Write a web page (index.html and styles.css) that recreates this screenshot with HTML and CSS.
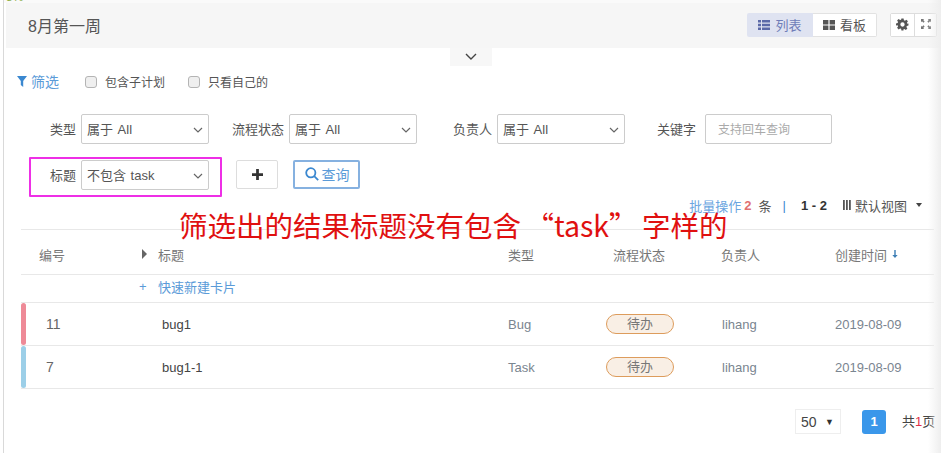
FILE: index.html
```html
<!DOCTYPE html>
<html lang="zh-CN">
<head>
<meta charset="utf-8">
<title>8月第一周</title>
<link rel="stylesheet" href="styles.css">
</head>
<body>
<div class="page">
  <div class="progress-label">8%</div>
  <div class="top-strip"></div>
  <header class="topbar">
    <h1 class="title">8月第一周</h1>
    <div class="view-switch">
      <button class="view-btn active"><svg class="ico" viewBox="0 0 12 10"><path d="M0 0h3v2.400H0zM4 0h8v2.400H4zM0 3.800h3v2.400H0zM4 3.800h8v2.400H4zM0 7.600h3V10H0zM4 7.600h8V10H4z"/></svg>列表</button>
      <button class="view-btn"><svg class="ico" viewBox="0 0 12 10"><path d="M0 0h5.400v4.400H0zM6.600 0H12v4.400H6.600zM0 5.600h5.400V10H0zM6.600 5.600H12V10H6.600z"/></svg>看板</button>
    </div>
    <div class="tool-group">
      <button class="tool-btn"><svg class="gear" viewBox="0 0 24 24"><path fill-rule="evenodd" d="M10 1h4l.6 3.200 1.900.8 2.700-1.800 2.800 2.800-1.800 2.700.8 1.900L23 10v4l-3 .6-.8 1.900 1.800 2.700-2.800 2.800-2.700-1.800-1.900.8L13.900 23H10l-.6-3-1.900-.8-2.700 1.800L2 18.200l1.800-2.700-.8-1.900L0 13.900V10l3-.6.8-1.900L2 4.800 4.800 2l2.700 1.800 1.900-.8zM12 8a4 4 0 1 0 0 8 4 4 0 0 0 0-8z"/></svg></button>
      <button class="tool-btn"><svg class="expand" viewBox="0 0 11 11"><path d="M0 0h3.500L2.400 1.100 4 2.700 2.700 4 1.100 2.400 0 3.500zM11 0v3.500L9.900 2.400 8.300 4 7 2.700l1.600-1.600L7.500 0zM0 11V7.500l1.100 1.100L2.700 7 4 8.300 2.400 9.900 3.500 11zM11 11H7.500l1.100-1.100L7 8.300 8.300 7l1.600 1.600L11 7.500z"/></svg></button>
    </div>
  </header>
  <div class="collapse-tab"><svg class="collapse-ico" viewBox="0 0 12 7"><path d="M1 1l5 5 5-5"/></svg></div>

  <div class="filter-row">
    <span class="filter-link"><svg class="funnel" viewBox="0 0 10 11"><path d="M0 0h10L6.200 5v6L3.800 9V5z"/></svg>筛选</span>
    <label class="check"><span class="box"></span>包含子计划</label>
    <label class="check"><span class="box"></span>只看自己的</label>
  </div>

  <div class="fields">
    <div class="field"><span class="field-label">类型</span><div class="select">属于 All<svg class="chev" viewBox="0 0 10 6"><path d="M1 1l4 4 4-4"/></svg></div></div>
    <div class="field"><span class="field-label">流程状态</span><div class="select">属于 All<svg class="chev" viewBox="0 0 10 6"><path d="M1 1l4 4 4-4"/></svg></div></div>
    <div class="field"><span class="field-label">负责人</span><div class="select">属于 All<svg class="chev" viewBox="0 0 10 6"><path d="M1 1l4 4 4-4"/></svg></div></div>
    <div class="field"><span class="field-label keyword-label">关键字</span><div class="keyword">支持回车查询</div></div>
  </div>

  <div class="fields second">
    <div class="field"><span class="field-label">标题</span><div class="select">不包含 task<svg class="chev" viewBox="0 0 10 6"><path d="M1 1l4 4 4-4"/></svg></div></div>
    <button class="add-btn"><svg class="plus" viewBox="0 0 12 12"><path d="M4.500 0h3v4.500H12v3H7.500V12h-3V7.500H0v-3h4.500z"/></svg></button>
    <button class="query-btn"><svg class="search" viewBox="0 0 14 14"><circle cx="5.800" cy="5.800" r="4.600"/><path d="M9.200 9.200l4 4"/></svg>查询</button>
  </div>

  <div class="toolbar">
    <span class="bulk">批量操作</span><b class="count">2</b><span class="unit">条</span><span class="sep">|</span><b class="range">1 - 2</b>
    <svg class="bars" viewBox="0 0 8 10"><path d="M0 0h1.800v10H0zM3 0h1.800v10H3zM6 0h1.800v10H6z"/></svg>
    <span class="view-name">默认视图</span><span class="caret"></span>
  </div>

  <div class="table">
    <div class="row head">
      <div class="num">编号</div>
      <div class="title-head"><span class="tri"></span>标题</div>
      <div>类型</div>
      <div>流程状态</div>
      <div>负责人</div>
      <div class="time-head">创建时间<svg class="sort" viewBox="0 0 6 9"><path d="M2.200 0h1.600v5.500H6L3 9 0 5.500h2.200z"/></svg></div>
    </div>
    <div class="quick"><span class="quick-plus">+</span>快速新建卡片</div>
    <div class="row data">
      <span class="stripe red"></span>
      <div class="num">11</div>
      <div class="name">bug1</div>
      <div>Bug</div>
      <div><span class="pill">待办</span></div>
      <div>lihang</div>
      <div>2019-08-09</div>
    </div>
    <div class="row data">
      <span class="stripe blue"></span>
      <div class="num">7</div>
      <div class="name">bug1-1</div>
      <div>Task</div>
      <div><span class="pill">待办</span></div>
      <div>lihang</div>
      <div>2019-08-09</div>
    </div>
  </div>

  <div class="pager">
    <div class="size">50<span class="size-caret">▼</span></div>
    <span class="page-num">1</span>
    <span class="total">共<em>1</em>页</span>
  </div>

  <div class="highlight"></div>
  <div class="annotation">筛选出的结果标题没有包含 “task” 字样的</div>
  <div class="edge-shadow"></div>
</div>
</body>
</html>
```
FILE: styles.css
```css
* { box-sizing: border-box; }
html, body { margin: 0; padding: 0; background: #fff; }
body { font-family: "Liberation Sans", "Noto Sans CJK SC", sans-serif; font-size: 13px; color: #555; }
button { font: inherit; padding: 0; background: #fff; cursor: pointer; }

.page { position: relative; width: 941px; height: 453px; overflow: hidden; padding-left: 4px; }
.page::before { content: ""; position: absolute; left: 3px; top: 0; bottom: 0; width: 1px; background: #d9d9d9; }
.progress-label { position: absolute; left: 6px; top: -10px; font-size: 12px; line-height: 14px; color: #8fb04a; z-index: 1; }
.top-strip { height: 3px; background: #fafafa; }

.topbar { display: flex; align-items: center; height: 45px; margin-left: 2px; padding: 0 4px 0 22px; background: #f6f6f6; }
.title { flex: 1; margin: 0; padding-bottom: 2px; font-size: 16px; font-weight: 400; color: #555; }
.view-switch { display: flex; height: 24px; margin-top: -1px; }
.view-btn { display: flex; align-items: center; justify-content: center; width: 64px; padding-bottom: 1px; border: 1px solid #e2e2e2; border-left: 0; border-radius: 0 2px 2px 0; color: #555; font-size: 13px; }
.view-btn.active { width: 66px; background: #dfe3f1; color: #6f7db8; border: 0; border-radius: 2px 0 0 2px; }
.ico { width: 12px; height: 10px; margin-right: 5px; }
.view-btn.active .ico { fill: #5b69a8; }
.view-btn:not(.active) .ico { fill: #555; }
.tool-group { display: flex; height: 24px; margin-top: -1px; margin-left: 13px; border: 1px solid #ddd; border-radius: 2px; background: #fff; }
.tool-btn { display: flex; align-items: center; justify-content: center; width: 23px; border: 0; }
.tool-btn + .tool-btn { border-left: 1px solid #ddd; width: 22px; }
.gear { width: 13px; height: 13px; fill: #555; margin-top: -2px; }
.expand { width: 10px; height: 10px; fill: #777; margin-top: -2px; }

.collapse-tab { display: flex; align-items: center; justify-content: center; width: 42px; height: 18px; margin-left: 446px; background: #f7f7f7; }
.collapse-ico { width: 12px; height: 7px; fill: none; stroke: #444; stroke-width: 1.4; margin-top: -2px; }

.filter-row { display: flex; align-items: center; height: 20px; margin-top: 6px; padding-left: 13px; }
.filter-link { display: flex; align-items: center; width: 68px; padding-bottom: 2px; color: #5b9bd8; font-size: 14px; }
.funnel { width: 10px; height: 11px; margin-right: 4px; fill: #3b88d0; }
.check { display: flex; align-items: center; padding-bottom: 1px; font-size: 12px; color: #555; }
.check + .check { margin-left: 23px; }
.box { width: 12px; height: 12px; margin-right: 8px; border: 1px solid #b4b4b4; border-radius: 3px; background: #efefef; }

.fields { display: grid; grid-template-columns: repeat(4, 188px); column-gap: 20px; height: 30px; margin-top: 22px; padding-left: 17px; }
.fields.second { display: flex; column-gap: 0; margin-top: 16px; }
.field { display: flex; align-items: stretch; }
.field-label { display: flex; align-items: center; justify-content: flex-end; width: 56px; margin-right: 4px; padding: 0 1px 2px 0; color: #555; font-size: 13px; white-space: nowrap; }
.keyword-label { padding-right: 5px; }
.select { display: flex; align-items: center; justify-content: space-between; width: 128px; padding: 0 5px 2px 5px; border: 1px solid #ccc; border-radius: 2px; background: #fff; font-size: 13px; color: #555; word-spacing: 1px; }
.chev { width: 10px; height: 6px; fill: none; stroke: #666; stroke-width: 1.2; margin-top: 3px; }
.keyword { display: flex; align-items: center; width: 127px; padding: 0 0 2px 12px; border: 1px solid #ccc; border-radius: 2px; font-size: 12px; color: #aaa; }
.add-btn { display: flex; align-items: center; justify-content: center; width: 42px; height: 29px; margin-left: 27px; border: 1px solid #ddd; border-radius: 2px; }
.plus { width: 11px; height: 11px; fill: #333; }
.query-btn { display: flex; align-items: center; justify-content: center; width: 67px; height: 29px; margin-left: 15px; padding-bottom: 1px; border: 2px solid #86b1e0; border-radius: 2px; color: #5b9bd8; font-size: 14px; }
.search { width: 14px; height: 14px; margin: 0 3px 0 1px; fill: none; stroke: #3b88d0; stroke-width: 1.8; }

.toolbar { display: flex; align-items: center; justify-content: flex-end; height: 20px; margin-top: 5px; margin-right: 19px; font-size: 13px; }
.bulk { color: #6aa5e0; }
.count { margin-left: 3px; color: #e07070; }
.unit { margin-left: 7px; color: #555; }
.sep { margin-left: 11px; color: #3b88d0; }
.range { margin-left: 15px; color: #333; }
.bars { width: 8px; height: 10px; margin-left: 16px; fill: #555; }
.view-name { margin-left: 4px; color: #555; }
.caret { width: 0; height: 0; margin-left: 9px; border-style: solid; border-width: 4px 3.500px 0; border-color: #444 transparent transparent; }

.table { width: 913px; margin-top: 14px; margin-left: 17px; border-top: 1px solid #e8e8e8; color: #7a8590; font-size: 13px; }
.row { display: grid; align-items: center; border-bottom: 1px solid #e8e8e8; }
.row.head { grid-template-columns: 118px 369px 105px 108px 114px 1fr; height: 45px; padding-top: 4px; color: #777; font-size: 13px; }
.row.head .num { padding-left: 18px; }
.title-head { display: flex; align-items: center; }
.tri { width: 0; height: 0; margin: 0 11px 0 3px; border-style: solid; border-width: 5px 0 5px 5px; border-color: transparent transparent transparent #666; }
.time-head { display: flex; align-items: center; }
.sort { width: 6px; height: 8px; margin-left: 5px; fill: #3f7fb5; }
.quick { display: flex; align-items: center; height: 28px; padding: 0 0 4px 118px; border-bottom: 1px solid #e8e8e8; color: #5b9bd8; }
.quick-plus { width: 19px; }
.row.data { grid-template-columns: 5px 136px 346px 98px 116px 113px 1fr; height: 43px; font-size: 13px; }
.row.data .num { padding-left: 20px; color: #666; font-size: 14px; }
.row.data .name { color: #444; font-size: 13px; }
.stripe { align-self: stretch; border-radius: 3px; }
.stripe.red { background: #ee8a97; }
.stripe.blue { background: #9ccfe8; }
.pill { display: flex; align-items: center; justify-content: center; width: 68px; height: 20px; padding-bottom: 4px; border: 1px solid #dd9c5c; border-radius: 10px; background: #f9efe5; color: #777; font-size: 13px; }

.pager { display: flex; align-items: center; justify-content: flex-end; height: 25px; margin-top: 20px; margin-right: 5px; }
.size { display: flex; align-items: center; justify-content: space-between; width: 46px; height: 25px; padding: 0 6px 0 5px; border: 1px solid #eee; color: #444; font-size: 14px; }
.size-caret { font-size: 9px; color: #333; }
.page-num { display: flex; align-items: center; justify-content: center; width: 24px; height: 24px; margin-left: 21px; border-radius: 3px; background: #3a97ea; color: #fff; font-weight: bold; font-size: 13px; }
.total { width: 34px; margin-left: 16px; padding-bottom: 3px; color: #444; font-size: 13px; white-space: nowrap; }
.total em { font-style: normal; color: #e0304a; }

.highlight { position: absolute; left: 29px; top: 157px; width: 193px; height: 40px; border: 2px solid #ee2fe6; border-radius: 1px; }
.annotation { position: absolute; left: 179px; top: 204px; font-family: "Noto Sans CJK SC", sans-serif; font-size: 28.500px; line-height: 42px; word-spacing: -2px; color: #e01010; white-space: nowrap; }
.edge-shadow { position: absolute; right: 0; top: 0; bottom: 0; width: 13px; background: linear-gradient(to right, rgba(235,235,235,0), #eeeeee); pointer-events: none; }
```
